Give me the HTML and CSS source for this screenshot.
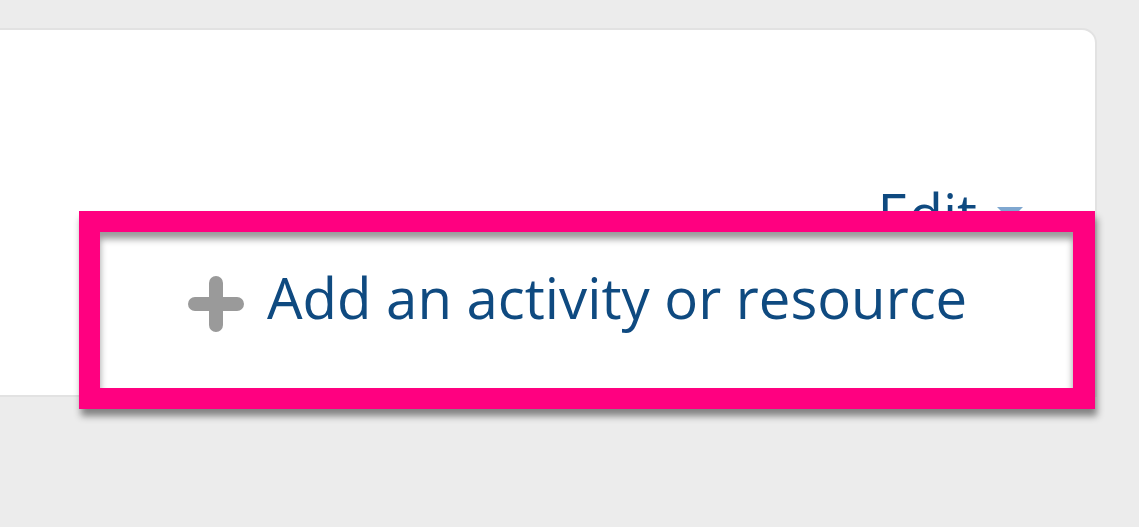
FILE: index.html
```html
<!DOCTYPE html>
<html lang="en">
<head>
    <meta charset="UTF-8">
    <title>Add an activity or resource</title>
    <link rel="stylesheet" href="styles.css">
</head>
<body>
    <div class="stage">
        <div class="section-card">
            <div class="section-actions">
                <a class="edit-menu" href="#">Edit<span class="caret"></span></a>
            </div>
        </div>

        <!-- highlight annotation over the section footer -->
        <div class="highlight">
            <a class="add-activity" href="#">
                <svg class="plus-icon" viewBox="0 0 56 56" aria-hidden="true">
                    <path d="M28 7 V49 M7 28 H49" stroke="#9a9a9a" stroke-width="14" stroke-linecap="round" fill="none"/>
                </svg>
                <span class="add-label">Add an activity or resource</span>
            </a>
        </div>
    </div>
</body>
</html>
```

FILE: styles.css
```css
body, html {
    margin: 0;
    padding: 0;
    width: 100%;
    height: 100%;
    overflow: hidden;
    background-color: #ececec;
    font-family: 'Open Sans', sans-serif;
}
.stage {
    position: relative;
    height: 100%;
    box-sizing: border-box;
    padding-top: 28px;
}
.section-card {
    margin-left: -40px;
    width: 1137px;
    height: 369px;
    box-sizing: border-box;
    background-color: #ffffff;
    border: 2px solid #e2e2e2;
    border-radius: 0 15px 0 0;
}
.section-actions {
    display: flex;
    justify-content: flex-end;
    padding: 155px 72px 0 0;
}
.edit-menu {
    display: flex;
    align-items: center;
    color: #0f4a80;
    font-size: 56px;
    line-height: 1;
    text-decoration: none;
}
.caret {
    margin-left: 20px;
    border-left: 13px solid transparent;
    border-right: 13px solid transparent;
    border-top: 13px solid #7fa7d0;
}
.highlight {
    position: absolute;
    left: 79px;
    top: 211px;
    width: 1016px;
    height: 198px;
    box-sizing: border-box;
    border: 21px solid #ff0080;
    border-right-width: 22px;
    background-color: #ffffff;
    padding: 37px 0 0 88px;
    box-shadow: 2px 7px 7px rgba(0, 0, 0, 0.45), inset 0 7px 7px rgba(0, 0, 0, 0.4);
}
.add-activity {
    display: flex;
    align-items: flex-start;
    gap: 23px;
    text-decoration: none;
}
.plus-icon {
    width: 56px;
    height: 56px;
    margin-top: 7px;
    flex: 0 0 56px;
}
.add-label {
    color: #0f4a80;
    font-size: 56.3px;
    line-height: 1;
}
```
